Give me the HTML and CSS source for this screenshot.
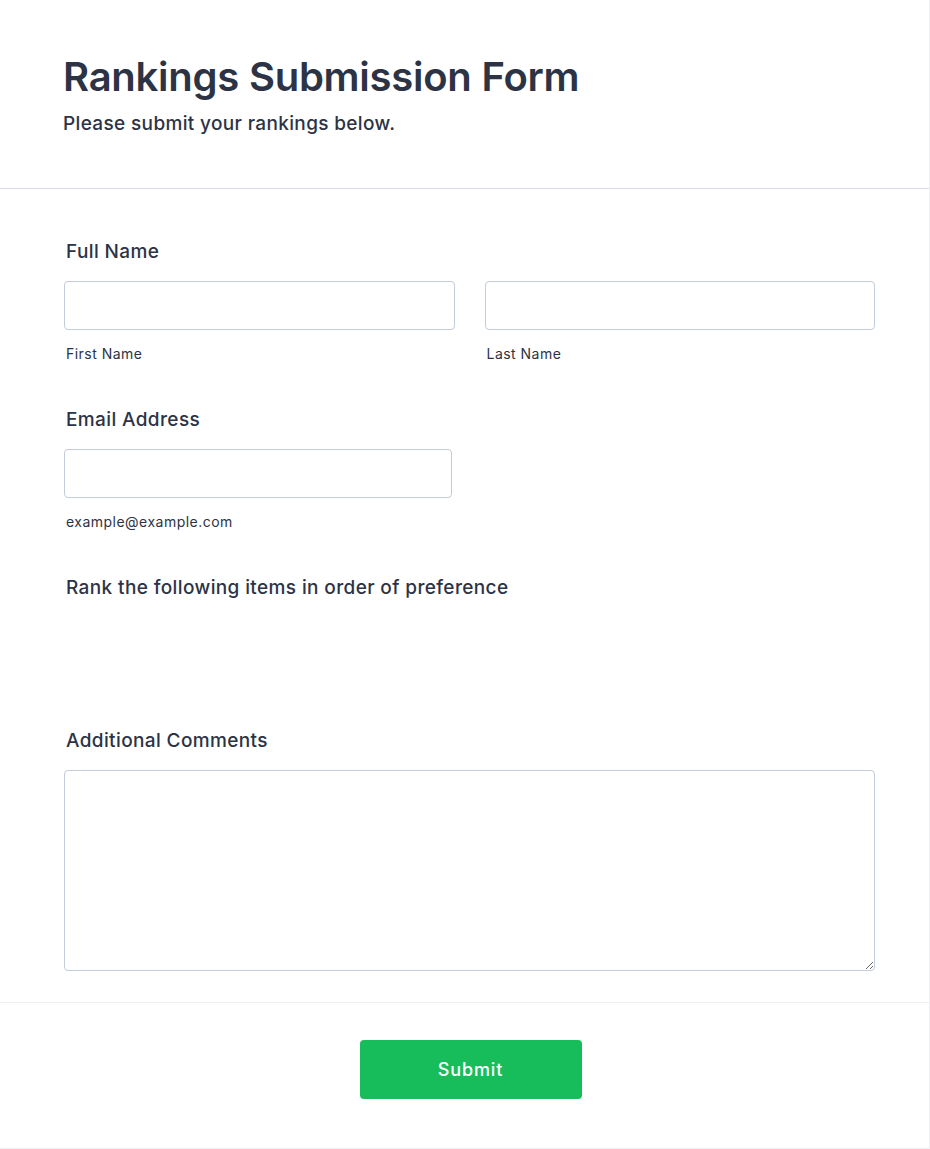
FILE: index.html
```html
<!DOCTYPE html>
<html lang="en">
<head>
<meta charset="utf-8">
<title>Rankings Submission Form</title>
<link rel="stylesheet" href="styles.css">
</head>
<body>
<form class="form-card">
  <header class="form-header">
    <h1 class="form-title">Rankings Submission Form</h1>
    <p class="form-subtitle">Please submit your rankings below.</p>
  </header>
  <div class="form-fields">
    <div class="field">
      <label class="field-label">Full Name</label>
      <div class="name-grid">
        <div class="sub-field">
          <input class="text-input" type="text">
          <span class="sub-label">First Name</span>
        </div>
        <div class="sub-field">
          <input class="text-input" type="text">
          <span class="sub-label">Last Name</span>
        </div>
      </div>
    </div>
    <div class="field">
      <label class="field-label">Email Address</label>
      <div class="sub-field email-field">
        <input class="text-input" type="email">
        <span class="sub-label">example@example.com</span>
      </div>
    </div>
    <div class="field">
      <label class="field-label">Rank the following items in order of preference</label>
      <div class="rank-area"></div>
    </div>
    <div class="field">
      <label class="field-label">Additional Comments</label>
      <textarea class="text-area"></textarea>
    </div>
  </div>
  <footer class="form-footer">
    <button class="submit-btn" type="button">Submit</button>
  </footer>
</form>
</body>
</html>
```

FILE: styles.css
```css
html, body {
  margin: 0;
  padding: 0;
  background: #ffffff;
}

body {
  font-family: Inter, "Noto Sans", "Liberation Sans", sans-serif;
  color: #2c3345;
}

.form-card {
  box-sizing: border-box;
  width: 930px;
  min-height: 1149px;
  border-right: 1px solid #eef0f4;
  border-bottom: 1px solid #eef0f4;
  display: flex;
  flex-direction: column;
}

.form-header {
  padding: 53px 64px 52px 63px;
  border-bottom: 1px solid #dadee8;
}

.form-title {
  margin: 0;
  font-size: 40px;
  line-height: 48px;
  font-weight: 600;
  letter-spacing: -0.25px;
}

.form-subtitle {
  margin: 11px 0 0;
  font-size: 19px;
  line-height: 24px;
  font-weight: 500;
  letter-spacing: 0.35px;
}

.form-fields {
  padding: 29px 54px 9px 64px;
}

.field {
  display: flex;
  flex-direction: column;
  padding: 22px 0;
}

.field-label {
  display: block;
  font-size: 19px;
  line-height: 24px;
  font-weight: 500;
  letter-spacing: 0.38px;
  padding-left: 2px;
  margin-bottom: 17px;
}

.name-grid {
  display: grid;
  grid-template-columns: 1fr 1fr;
  column-gap: 30px;
}

.sub-field {
  display: flex;
  flex-direction: column;
}

.email-field {
  width: 388px;
}

.text-input {
  box-sizing: border-box;
  height: 49px;
  width: 100%;
  margin: 0;
  border: 1px solid #c3cad8;
  border-radius: 4px;
  background: #ffffff;
  font-family: inherit;
  font-size: 16px;
  padding: 0 12px;
}

.sub-label {
  display: block;
  margin-top: 14px;
  font-size: 14px;
  line-height: 20px;
  letter-spacing: 0.48px;
  padding-left: 2px;
}

.rank-area {
  height: 68px;
}

.text-area {
  box-sizing: border-box;
  width: 100%;
  height: 201px;
  margin: 0;
  border: 1px solid #c3cad8;
  border-radius: 4px;
  background: #ffffff;
  font-family: inherit;
  font-size: 16px;
  padding: 10px 12px;
}

.form-footer {
  border-top: 1px solid #eceef3;
  display: flex;
  justify-content: center;
  padding: 37px 0 48px 12px;
}

.submit-btn {
  width: 222px;
  height: 59px;
  border: none;
  border-radius: 4px;
  background: #18bd5b;
  color: #ffffff;
  font-family: inherit;
  font-size: 18px;
  font-weight: 500;
  letter-spacing: 0.9px;
  cursor: pointer;
}
```
